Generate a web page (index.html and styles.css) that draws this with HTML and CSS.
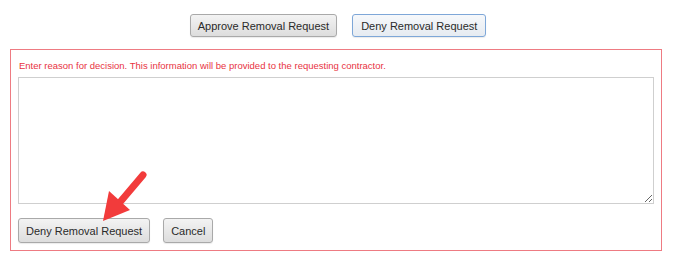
FILE: index.html
```html
<!DOCTYPE html>
<html>
<head>
<meta charset="utf-8">
<link rel="stylesheet" href="styles.css">
</head>
<body>
<div class="top-actions">
  <button class="btn">Approve Removal Request</button>
  <button class="btn btn-active">Deny Removal Request</button>
</div>
<div class="decision-box">
  <div class="reason-label">Enter reason for decision. This information will be provided to the requesting contractor.</div>
  <textarea class="reason-input"></textarea>
  <div class="bottom-actions">
    <button class="btn">Deny Removal Request</button>
    <button class="btn">Cancel</button>
  </div>
  <svg class="arrow" width="60" height="60" viewBox="0 0 60 60">
    <line x1="42" y1="5" x2="20" y2="31" stroke="#f23b3b" stroke-width="7" stroke-linecap="round"/>
    <polygon points="2,51 8,21 29,40" fill="#f23b3b"/>
  </svg>
</div>
</body>
</html>
```
FILE: styles.css
```css
html, body {
  margin: 0;
  padding: 0;
  background: #fff;
  font-family: "Liberation Sans", Arial, sans-serif;
}
.top-actions {
  display: flex;
  justify-content: center;
  gap: 15px;
  padding-top: 14px;
  padding-left: 2px;
}
.btn {
  font-family: "Liberation Sans", Arial, sans-serif;
  font-size: 11px;
  color: #2a2a2a;
  height: 23px;
  padding: 0 7px;
  border: 1px solid #a9a9a9;
  border-radius: 3px;
  background: linear-gradient(#f3f3f3, #dddddd);
  box-shadow: 0 1px 1px rgba(0,0,0,0.08);
}
.btn-active {
  border-color: #7ea7d8;
  background: linear-gradient(#f6f8fb, #e6ebf1);
  padding: 0 8px;
}
.decision-box {
  position: relative;
  margin: 12px 0 0 10px;
  width: 650px;
  height: 200px;
  border: 1px solid #ee7b82;
  box-sizing: content-box;
  padding: 0;
}
.reason-label {
  font-size: 9.5px;
  color: #e8333f;
  padding: 10px 0 0 8px;
  height: 17px;
}
.reason-input {
  display: block;
  margin: 0 0 0 7px;
  width: 636px;
  height: 127px;
  box-sizing: border-box;
  border: 1px solid #cfcfcf;
  resize: vertical;
}
.bottom-actions {
  display: flex;
  gap: 13px;
  padding: 14px 0 0 7px;
}
.bottom-actions .btn {
  height: 25px;
}
.arrow {
  position: absolute;
  left: 90px;
  top: 120px;
}
```
